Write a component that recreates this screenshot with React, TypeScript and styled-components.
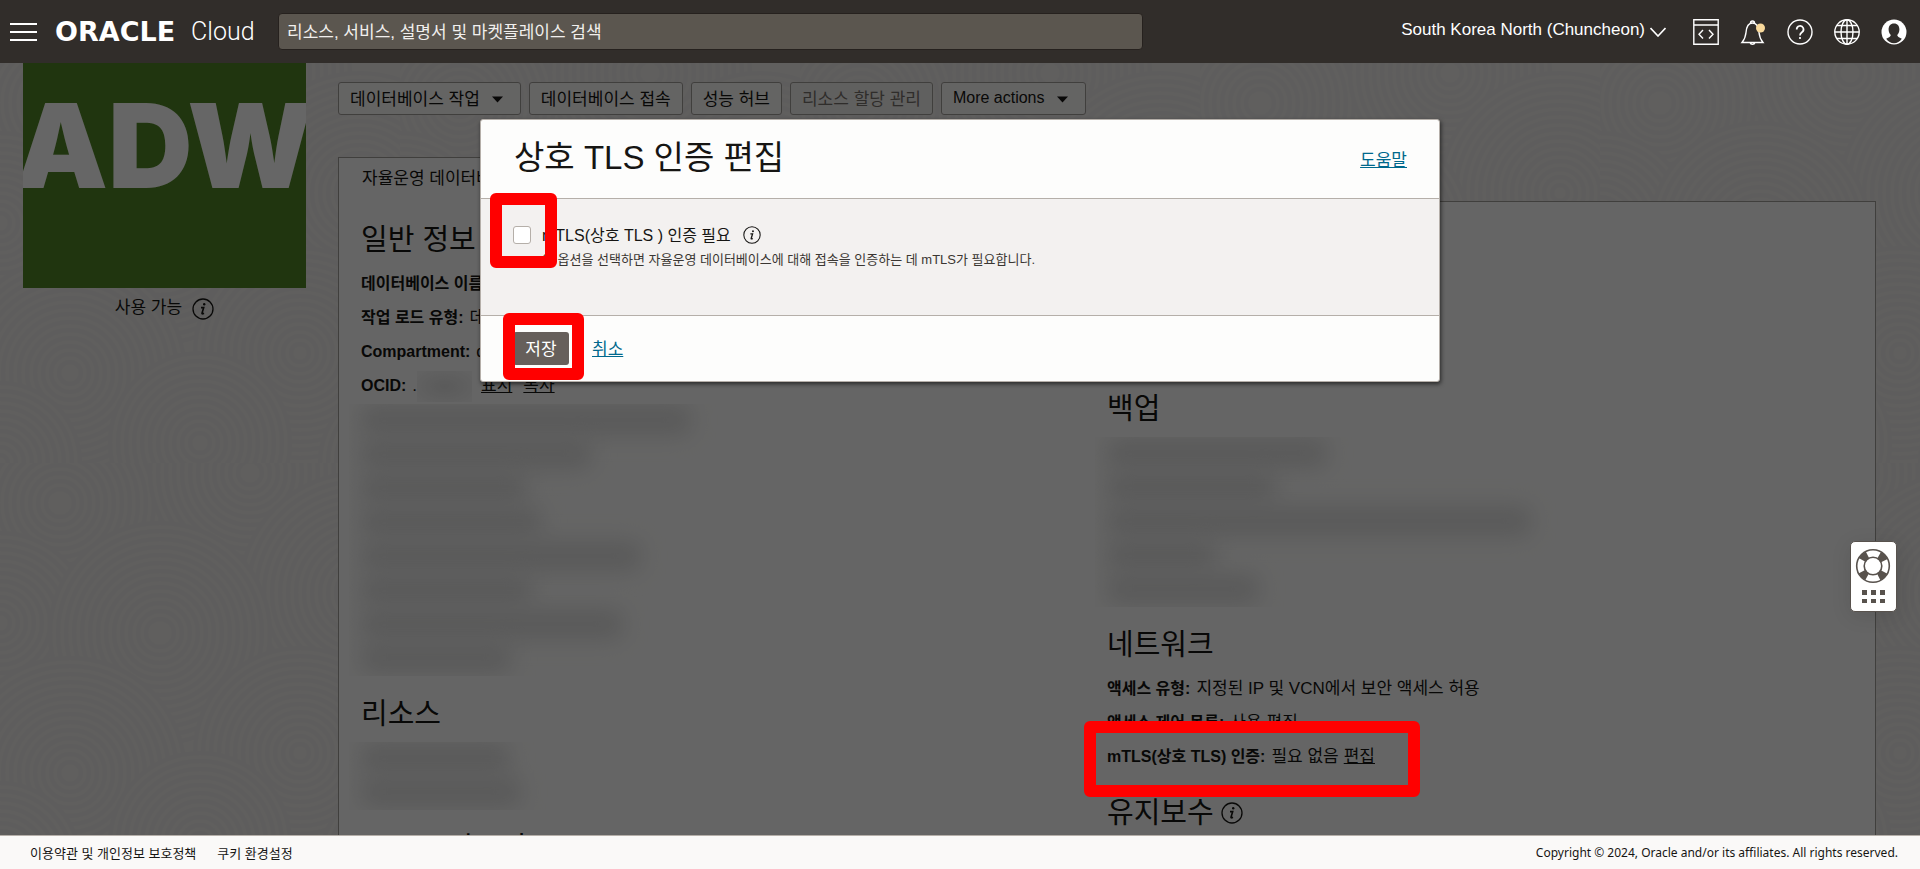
import React from "react";
import styled, { createGlobalStyle, css } from "styled-components";

const GlobalStyle = createGlobalStyle`
  *, *::before, *::after { box-sizing: border-box; }
  body {
    margin: 0;
    font-family: "Liberation Sans", "Noto Sans CJK KR", sans-serif;
    font-size: 16px;
    color: #161513;
  }
  button, input { font: inherit; color: inherit; }
  h1, h2, p, dl, dd { margin: 0; font-weight: 400; }
`;

const Shell = styled.div`
  display: grid;
  grid-template-rows: 63px minmax(0, 1fr) auto;
  height: 100vh;
`;

/* ---------- top bar ---------- */

const TopBar = styled.header`
  display: flex;
  align-items: center;
  padding: 0 13px 0 10px;
  background: #312d2a;
  color: #fff;
`;

const IconButton = styled.button`
  display: block;
  flex: none;
  padding: 0;
  border: 0;
  background: none;
  color: #fff;
  svg { display: block; }
`;

const Brand = styled.a`
  display: flex;
  align-items: center;
  flex: none;
  gap: 16px;
  width: 223px;
  margin-left: 18px;
  color: #fff;
  text-decoration: none;
  line-height: 24px;
`;

const BrandName = styled.span`
  font-family: "DejaVu Sans", sans-serif;
  font-weight: 700;
  font-size: 27px;
`;

const BrandProduct = styled.span`
  font-family: Roboto, sans-serif;
  font-weight: 300;
  font-size: 25px;
`;

const Search = styled.input`
  flex: 0 1 865px;
  min-width: 120px;
  height: 37px;
  padding: 2px 8px 0;
  border: 1px solid #26211e;
  border-radius: 4px;
  background: #5b564f;
  font-size: 17px;
  &::placeholder { color: #f1efed; opacity: 1; }
`;

const Region = styled.button`
  display: flex;
  align-items: center;
  gap: 5px;
  margin-left: auto;
  padding: 0;
  border: 0;
  background: none;
  color: #fff;
  font-size: 17px;
  line-height: 20px;
  white-space: nowrap;
  span { padding-bottom: 4px; }
`;

const Tools = styled.nav`
  display: flex;
  gap: 21px;
  margin-left: 27px;
`;

/* ---------- page ---------- */

const Main = styled.main`
  position: relative;
  display: flex;
  overflow: hidden;
  background: #f0eeea;
`;

const Texture = styled.svg`
  position: absolute;
  inset: 0;
  width: 100%;
  height: 100%;
`;

const Sidebar = styled.aside`
  position: relative;
  flex: none;
  width: 283px;
  margin-left: 23px;
`;

const Tile = styled.div`
  display: flex;
  justify-content: center;
  height: 225px;
  padding-top: 19px;
  overflow: hidden;
  background: #528526;
  color: #fff;
  font: 900 117px/128px Inter, sans-serif;
`;

const Status = styled.p`
  display: flex;
  align-items: center;
  justify-content: center;
  gap: 10px;
  padding-top: 7px;
  font-size: 17px;
  line-height: 26px;
  svg { margin-top: 2px; }
`;

const Content = styled.div`
  position: relative;
  flex: 1;
  min-width: 0;
  margin: 0 44px 0 32px;
  padding-top: 19px;
`;

const Actions = styled.div`
  display: flex;
  gap: 8px;
`;

const Action = styled.button`
  display: flex;
  align-items: center;
  gap: 12px;
  height: 33px;
  padding: 0 11px 2px;
  border: 1px solid #a19d99;
  border-radius: 3px;
  background: #fbf9f8;
  font-size: 17px;
  white-space: nowrap;
  &:lang(en) { font-size: 16px; }
  &:disabled { background: #f1efed; color: #77716b; }
  svg { margin: 4px 6px 0 0; }
`;

const Tabs = styled.div`
  display: flex;
  margin-top: 42px;
`;

const Tab = styled.button`
  height: 45px;
  margin-bottom: -1px;
  padding: 0 23px 8px;
  border: 1px solid #a19d99;
  border-bottom: 0;
  background: #fdfdfc;
  font-size: 17px;
  z-index: 1;
`;

const Panel = styled.section`
  display: grid;
  grid-template-columns: 1fr 1fr;
  min-height: 900px;
  padding: 0 22px;
  border: 1px solid #a19d99;
  background: #fdfdfc;
`;

const Column = styled.div<{ $offset?: boolean }>`
  padding-top: ${(p) => (p.$offset ? 169 : 0)}px;
`;

const Heading = styled.h2`
  display: flex;
  align-items: center;
  gap: 7px;
  padding: 20px 0 10px;
  font-size: 29px;
  line-height: 36px;
`;

const Row = styled.div`
  position: relative;
  display: flex;
  align-items: baseline;
  gap: 6px;
  height: 34px;
  line-height: 32px;
  white-space: nowrap;
  dt { font-weight: 700; }
  dd { display: flex; gap: 5px; font-size: 17px; }
`;

const InkLink = styled.a<{ $spaced?: boolean }>`
  color: inherit;
  margin-right: ${(p) => (p.$spaced ? 6 : 0)}px;
`;

const Hidden = styled.span`
  display: inline-block;
  width: 55px;
  height: 31px;
  margin-right: 4px;
  vertical-align: middle;
  background: radial-gradient(ellipse at center, #e2e2e2, #f5f5f5 90%);
`;

const Redacted = styled.div`
  margin-left: -12px;
  padding-left: 12px;
  overflow: hidden;
`;

const RedactedLine = styled.div`
  height: 34px;
  padding-top: 1px;
`;

const Smear = styled.div`
  height: 30px;
  border-radius: 8px;
  background: #dfdfdf;
  filter: blur(11px);
`;

/* ---------- dialog ---------- */

const Backdrop = styled.div`
  position: absolute;
  inset: 0;
  z-index: 3;
  display: flex;
  justify-content: center;
  align-items: flex-start;
  padding-top: 56px;
  background: rgba(0, 0, 0, 0.6);
`;

const Dialog = styled.form`
  width: 50%;
  border: 1px solid #b5afa9;
  border-radius: 3px;
  background: #fdfdfc;
  box-shadow: 1px 2px 4px rgba(0, 0, 0, 0.6);
`;

const DialogHead = styled.div`
  display: flex;
  align-items: center;
  justify-content: space-between;
  height: 78px;
  padding: 0 32px 2px 33px;
  h1 { font-size: 33px; line-height: 40px; }
`;

const DialogBody = styled.div`
  height: 118px;
  padding: 24px 32px;
  border: solid #b5afa9;
  border-width: 1px 0;
  background: #f3f1f0;
`;

const CheckLine = styled.div`
  position: relative;
  display: flex;
  align-items: center;
  height: 24px;
  label { margin: 0 12px 0 11px; padding-bottom: 3px; }
`;

const Checkbox = styled.input`
  appearance: none;
  width: 18px;
  height: 18px;
  margin: 0;
  border: 1px solid #b5afa9;
  border-radius: 3px;
  background: #fff;
`;

const Hint = styled.p`
  padding-left: 29px;
  font-size: 13px;
  line-height: 25px;
  color: #3a3632;
`;

const DialogFoot = styled.div`
  position: relative;
  display: flex;
  align-items: center;
  gap: 23px;
  height: 65px;
  padding-left: 32px;
  a { padding-bottom: 3px; }
`;

const Save = styled.button`
  width: 56px;
  height: 33px;
  padding: 0 0 3px;
  border: 0;
  border-radius: 3px;
  background: #665f5b;
  color: #fff;
  font-size: 17px;
`;

const Link = styled.a`
  color: #00688c;
  font-size: 17px;
`;

const markPlaces = {
  checkbox: css`left: -23px; top: -30px; width: 67px; height: 75px;`,
  save: css`left: 22px; top: -3px; width: 81px; height: 67px;`,
  mtls: css`left: -23px; top: -20px; width: 336px; height: 76px;`,
};

const Mark = styled.span<{ $at: keyof typeof markPlaces }>`
  position: absolute;
  z-index: 5;
  border: 12px solid #f00;
  border-radius: 6px;
  pointer-events: none;
  ${(p) => markPlaces[p.$at]}
`;

/* ---------- floating help and footer ---------- */

const Support = styled.button`
  position: absolute;
  right: 23px;
  bottom: 223px;
  z-index: 4;
  width: 47px;
  height: 71px;
  padding: 0;
  border: 1px solid #58524d;
  border-radius: 5px;
  background: #fff;
  box-shadow: 0 4px 20px rgba(0, 0, 0, 0.1);
  svg { display: block; }
`;

const Footer = styled.footer`
  display: flex;
  align-items: center;
  gap: 21px;
  height: 34px;
  padding: 0 22px 0 30px;
  border-top: 1px solid #b5afa9;
  background: #faf9f8;
  font-size: 13px;
  a { color: #161513; text-decoration: none; }
  p { margin-left: auto; font-family: "Noto Sans", sans-serif; font-size: 12px; }
`;

/* ---------- drawings ---------- */

const Info = ({ size }: { size: number }) => (
  <svg width={size} height={size} viewBox="0 0 22 22" fill="none" stroke="currentColor">
    <circle cx="11" cy="11" r="10" strokeWidth="1.3" />
    <circle cx="12.2" cy="6.3" r="1.2" fill="currentColor" stroke="none" />
    <path d="M9 9.6h2.7L10 15.2q-.2 1.2 2 .1" strokeWidth="1.6" />
  </svg>
);

const Caret = () => (
  <svg width="11" height="7" viewBox="0 0 11 7">
    <path d="M0 0.500h11L5.500 6.500z" fill="currentColor" />
  </svg>
);

const rings = [
  [60, 40, 110], [250, 10, 100], [360, 130, 120], [0, 160, 90], [160, 170, 110],
  [300, 290, 105], [70, 310, 115], [200, 380, 90], [400, 400, 80], [0, 400, 80],
];

const Rings = () => (
  <Texture aria-hidden="true">
    <defs>
      <pattern id="rings" width="400" height="400" patternUnits="userSpaceOnUse">
        {rings.map(([x, y, r]) => (
          <g key={`${x}-${y}`}>
            <circle cx={x} cy={y} r={r} fill="#efedea" />
            {Array.from({ length: Math.floor(r / 8) }, (_, i) => (
              <circle key={i} cx={x} cy={y} r={r - i * 8} fill="none" stroke="#eae9e8" strokeWidth="4" />
            ))}
          </g>
        ))}
      </pattern>
    </defs>
    <rect width="100%" height="100%" fill="url(#rings)" />
  </Texture>
);

const Stroke = ({ children }: { children: React.ReactNode }) => (
  <svg width="26" height="28" viewBox="0 0 26 28" fill="none" stroke="#fff" strokeWidth="1.4">
    {children}
  </svg>
);

const Smears = ({ widths }: { widths: number[] }) => (
  <Redacted>
    {widths.map((w, i) => (
      <RedactedLine key={i}>
        <Smear style={{ width: w }} />
      </RedactedLine>
    ))}
  </Redacted>
);

export default function App() {
  return (
    <Shell>
      <GlobalStyle />
      <TopBar>
        <IconButton aria-label="Menu">
          <svg width="27" height="18" viewBox="0 0 27 18" stroke="#fff" strokeWidth="2">
            <path d="M0 1h27M0 9h27M0 17h27" />
          </svg>
        </IconButton>
        <Brand href="#">
          <BrandName>ORACLE</BrandName>
          <BrandProduct>Cloud</BrandProduct>
        </Brand>
        <Search aria-label="Search" placeholder="리소스, 서비스, 설명서 및 마켓플레이스 검색" />
        <Region>
          <span>South Korea North (Chuncheon)</span>
          <svg width="16" height="10" viewBox="0 0 16 10" fill="none" stroke="#fff" strokeWidth="1.600">
            <path d="M.5 1l7.500 8 7.500-8" />
          </svg>
        </Region>
        <Tools>
          <IconButton aria-label="Developer tools">
            <Stroke>
              <path d="M.8 1.700h24.400v24.600H.8zM.8 7h24.400M10 12l-4 4.200 4 4.200M16 12l4 4.200-4 4.200" />
            </Stroke>
          </IconButton>
          <IconButton aria-label="Announcements">
            <Stroke>
              <path d="M2 24.500c3-3.500 3.500-5 4-10C6.500 8 9 5 12.500 5S18.500 8 19 14.500c.5 5 1 6.500 4 10zM10.500 5a2 2 0 1 1 4 0M10 24.500a2.600 2.600 0 0 0 5 0" />
              <circle cx="20.500" cy="10" r="4.500" fill="#f9d99b" stroke="none" />
            </Stroke>
          </IconButton>
          <IconButton aria-label="Help">
            <Stroke>
              <circle cx="13" cy="14" r="12" />
              <path d="M9.700 11.500a3.400 3.400 0 1 1 5.200 2.700c-1.300.9-1.900 1.500-1.900 3.300M13 19v2" strokeWidth="1.700" />
            </Stroke>
          </IconButton>
          <IconButton aria-label="Language">
            <Stroke>
              <circle cx="13" cy="14" r="12.200" />
              <ellipse cx="13" cy="14" rx="6" ry="12.200" />
              <path d="M13 1.800v24.400M.8 14h24.400M2.800 7.500h20.400M2.800 20.500h20.400" />
            </Stroke>
          </IconButton>
          <IconButton aria-label="Profile">
            <svg width="26" height="28" viewBox="0 0 26 28">
              <circle cx="13" cy="14" r="12.500" fill="#fff" />
              <path d="M13 5.500c3.600 0 5.400 2.600 5.400 6 0 2.600-1 4.400-2.200 5.600.2 1.700 1.600 2.200 4.600 3.600-2 2.800-4.600 4.600-7.800 4.600s-5.800-1.800-7.800-4.600c3-1.400 4.400-1.900 4.600-3.600-1.200-1.200-2.200-3-2.200-5.600 0-3.400 1.800-6 5.400-6z" fill="#312d2a" />
            </svg>
          </IconButton>
        </Tools>
      </TopBar>

      <Main>
        <Rings />
        <Sidebar>
          <Tile>ADW</Tile>
          <Status>
            사용 가능 <Info size={22} />
          </Status>
        </Sidebar>

        <Content>
          <Actions>
            <Action>데이터베이스 작업 <Caret /></Action>
            <Action>데이터베이스 접속</Action>
            <Action>성능 허브</Action>
            <Action disabled>리소스 할당 관리</Action>
            <Action lang="en">More actions <Caret /></Action>
          </Actions>
          <Tabs>
            <Tab>자율운영 데이터베이스 정보</Tab>
          </Tabs>
          <Panel>
            <Column>
              <Heading>일반 정보</Heading>
              <dl>
                <Row><dt>데이터베이스 이름:</dt></Row>
                <Row><dt>작업 로드 유형:</dt><dd>데</dd></Row>
                <Row><dt>Compartment:</dt><dd>d</dd></Row>
                <Row>
                  <dt>OCID:</dt>
                  <dd>
                    <span>.<Hidden /></span>
                    <InkLink href="#" $spaced>표시</InkLink>
                    <InkLink href="#">복사</InkLink>
                  </dd>
                </Row>
              </dl>
              <Smears widths={[330, 230, 165, 180, 280, 170, 262, 150]} />
              <Heading>리소스</Heading>
              <Smears widths={[148, 160]} />
              <Heading>APEX 인스턴스</Heading>
            </Column>
            <Column $offset>
              <Heading>백업</Heading>
              <Smears widths={[220, 168, 424, 108, 152]} />
              <Heading>네트워크</Heading>
              <dl>
                <Row><dt>액세스 유형:</dt><dd>지정된 IP 및 VCN에서 보안 액세스 허용</dd></Row>
                <Row><dt>액세스 제어 목록:</dt><dd>사용 <InkLink href="#">편집</InkLink></dd></Row>
                <Row>
                  <dt>mTLS(상호 TLS) 인증:</dt>
                  <dd>필요 없음 <InkLink href="#">편집</InkLink></dd>
                  <Mark $at="mtls" />
                </Row>
              </dl>
              <Heading>유지보수 <Info size={22} /></Heading>
            </Column>
          </Panel>
        </Content>

        <Backdrop>
          <Dialog role="dialog" aria-labelledby="dialog-title">
            <DialogHead>
              <h1 id="dialog-title">상호 TLS 인증 편집</h1>
              <Link href="#">도움말</Link>
            </DialogHead>
            <DialogBody>
              <CheckLine>
                <Checkbox type="checkbox" id="mtls" />
                <label htmlFor="mtls">mTLS(상호 TLS ) 인증 필요</label>
                <Info size={18} />
                <Mark $at="checkbox" />
              </CheckLine>
              <Hint>이 옵션을 선택하면 자율운영 데이터베이스에 대해 접속을 인증하는 데 mTLS가 필요합니다.</Hint>
            </DialogBody>
            <DialogFoot>
              <Save type="button">저장</Save>
              <Link href="#">취소</Link>
              <Mark $at="save" />
            </DialogFoot>
          </Dialog>
        </Backdrop>

        <Support aria-label="Support">
          <svg width="45" height="69" viewBox="0 0 45 69">
            <g fill="none" stroke="#58524d">
              <circle cx="22" cy="24" r="12.300" strokeWidth="8" strokeDasharray="7.300 12.020" strokeDashoffset="-6" />
              <circle cx="22" cy="24" r="16.300" strokeWidth="1.600" />
              <circle cx="22" cy="24" r="8.800" strokeWidth="1.600" />
            </g>
            <path d="M11 48h5v5h-5zM20 48h5v5h-5zM29 48h5v5h-5zM11 57h5v4h-5zM20 57h5v4h-5zM29 57h5v4h-5z" fill="#58524d" />
          </svg>
        </Support>
      </Main>

      <Footer>
        <a href="#">이용약관 및 개인정보 보호정책</a>
        <a href="#">쿠키 환경설정</a>
        <p>Copyright © 2024, Oracle and/or its affiliates. All rights reserved.</p>
      </Footer>
    </Shell>
  );
}
